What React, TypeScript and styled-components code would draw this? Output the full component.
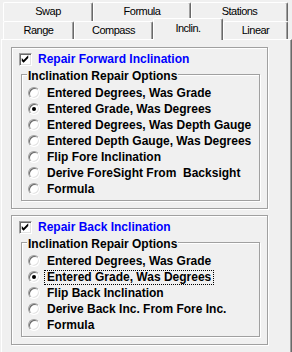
import React from 'react';
import styled, {createGlobalStyle} from 'styled-components';

const GlobalStyle = createGlobalStyle`
  html, body {
    margin: 0;
    padding: 0;
    background: #f0f0f0;
  }
  body {
    font-family: 'Liberation Sans', Arial, sans-serif;
    color: #000;
  }
`;

const forwardOptions = [
  'Entered Degrees, Was Grade',
  'Entered Grade, Was Degrees',
  'Entered Degrees, Was Depth Gauge',
  'Entered Depth Gauge, Was Degrees',
  'Flip Fore Inclination',
  'Derive ForeSight From  Backsight',
  'Formula',
];

const backOptions = [
  'Entered Degrees, Was Grade',
  'Entered Grade, Was Degrees',
  'Flip Back Inclination',
  'Derive Back Inc. From Fore Inc.',
  'Formula',
];

const backTabs = [
  {label: 'Swap', width: 90},
  {label: 'Formula', width: 98},
  {label: 'Stations', width: 97},
];

const frontTabs = [
  {label: 'Range', width: 71},
  {label: 'Compass', width: 79},
  {label: 'Inclin.', width: 70, active: true},
  {label: 'Linear', width: 65},
];

const RepairGroup = ({
  title,
  options,
  checkedIndex,
  focused,
}: {
  title: string;
  options: string[];
  checkedIndex: number;
  focused?: boolean;
}) => {
  return (
    <OuterGroup>
      <CheckRow>
        <CheckBox>
          <svg width="13" height="13" viewBox="0 0 13 13">
            <polygon points="3,5 5,7 10,2 10,5 5,10 3,8" fill="#000" />
          </svg>
        </CheckBox>
        <CheckLabel>{title}</CheckLabel>
      </CheckRow>
      <InnerGroup>
        <Legend>Inclination Repair Options</Legend>
        <OptionList>
          {options.map((option, index) => (
            <OptionRow key={index}>
              <Radio $checked={index === checkedIndex} />
              <OptionLabel $focused={focused && index === checkedIndex}>{option}</OptionLabel>
            </OptionRow>
          ))}
        </OptionList>
      </InnerGroup>
    </OuterGroup>
  );
};

const App = () => {
  return (
    <Window>
      <GlobalStyle />
      <BackRow>
        {backTabs.map((tab) => (
          <BackTab key={tab.label} $width={tab.width}>
            {tab.label}
          </BackTab>
        ))}
      </BackRow>
      <FrontRow>
        {frontTabs.map((tab) => (
          <FrontTab key={tab.label} $width={tab.width} $active={tab.active}>
            {tab.label}
          </FrontTab>
        ))}
      </FrontRow>
      <Panel>
        <RepairGroup
          title="Repair Forward Inclination"
          options={forwardOptions}
          checkedIndex={1}
        />
        <GroupGap />
        <RepairGroup
          title="Repair Back Inclination"
          options={backOptions}
          checkedIndex={1}
          focused
        />
      </Panel>
    </Window>
  );
};

export default App;

const Window = styled.div`
  width: 292px;
  height: 352px;
  overflow: hidden;
  background: #f0f0f0;
`;

const BackRow = styled.div`
  display: flex;
  padding: 2px 0 0 3px;
  height: 19px;
`;

const FrontRow = styled.div`
  display: flex;
  align-items: flex-start;
  padding-left: 3px;
  height: 18px;
`;

const TabBase = styled.div<{$width: number}>`
  box-sizing: border-box;
  width: ${(p) => p.$width}px;
  background: #f0f0f0;
  border-top: 1px solid #fff;
  border-left: 1px solid #fff;
  border-right: 1px solid #696969;
  border-radius: 2px 2px 0 0;
  box-shadow: inset -1px 0 #a0a0a0;
  font-size: 11px;
  letter-spacing: -0.5px;
  text-align: center;
  color: #000;
`;

const BackTab = styled(TabBase)`
  height: 19px;
  line-height: 17px;
`;

const FrontTab = styled(TabBase)<{$active?: boolean}>`
  position: relative;
  z-index: ${(p) => (p.$active ? 2 : 1)};
  height: ${(p) => (p.$active ? 22 : 18)}px;
  margin-top: ${(p) => (p.$active ? -3 : 0)}px;
  margin-bottom: ${(p) => (p.$active ? -1 : 0)}px;
  line-height: ${(p) => (p.$active ? 18 : 16)}px;
`;

const Panel = styled.div`
  box-sizing: border-box;
  margin-left: 1px;
  width: 291px;
  height: 330px;
  padding: 7px 0 0 9px;
  border-top: 1px solid #fff;
  border-left: 1px solid #fff;
  border-right: 1px solid #696969;
  box-shadow: inset -1px 0 #a0a0a0;
`;

const GroupGap = styled.div`
  height: 6px;
`;

const Etched = styled.div`
  box-sizing: border-box;
  border: 1px solid #a0a0a0;
  box-shadow: inset 1px 1px #fff, 1px 1px #fff;
`;

const OuterGroup = styled(Etched)`
  width: 257px;
  padding: 3px 7px 7px 7px;
`;

const InnerGroup = styled(Etched)`
  width: 239px;
  margin: 7px 0 0 2px;
  padding: 0 0 3px 6px;
  display: flex;
  flex-direction: column;
  align-items: flex-start;
`;

const Legend = styled.div`
  margin: -6px 0 0 -1px;
  padding: 0 1px;
  height: 14px;
  line-height: 14px;
  background: #f0f0f0;
  font-size: 12px;
  font-weight: bold;
`;

const OptionList = styled.div`
  margin-top: 2px;
  display: flex;
  flex-direction: column;
`;

const CheckRow = styled.div`
  display: flex;
  align-items: center;
  gap: 6px;
  height: 16px;
`;

const CheckBox = styled.span`
  box-sizing: border-box;
  display: flex;
  width: 13px;
  height: 13px;
  background: #fff;
  border: 1px solid;
  border-color: #a0a0a0 #fff #fff #a0a0a0;
  box-shadow: inset 1px 1px #696969, inset -1px -1px #e3e3e3;
  svg {
    margin: -1px 0 0 -1px;
  }
`;

const CheckLabel = styled.span`
  font-size: 12px;
  font-weight: bold;
  color: #0000ff;
  line-height: 14px;
`;

const OptionRow = styled.div`
  display: flex;
  align-items: center;
  gap: 7px;
  height: 16px;
`;

const Radio = styled.span<{$checked?: boolean}>`
  box-sizing: border-box;
  position: relative;
  display: block;
  width: 12px;
  height: 12px;
  border-radius: 50%;
  background: #fff;
  border: 1px solid;
  border-color: #a0a0a0 #fff #fff #a0a0a0;
  box-shadow: inset 1px 1px #696969, inset -1px -1px #e3e3e3;

  &::after {
    content: '';
    display: ${(p) => (p.$checked ? 'block' : 'none')};
    position: absolute;
    left: 3px;
    top: 3px;
    width: 4px;
    height: 4px;
    border-radius: 50%;
    background: #000;
  }
`;

const OptionLabel = styled.span<{$focused?: boolean}>`
  font-size: 12px;
  font-weight: bold;
  line-height: 13px;
  white-space: pre;
  padding: 0 2px;
  margin-left: -3px;
  border: 1px dotted ${(p) => (p.$focused ? '#000' : 'transparent')};
`;
